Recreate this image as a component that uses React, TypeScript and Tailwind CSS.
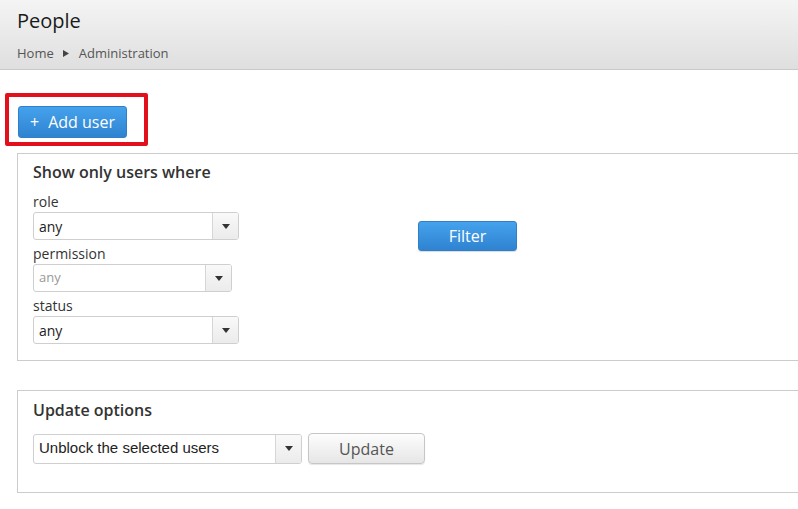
import React from 'react'

const font = { fontFamily: '"Open Sans", "Liberation Sans", sans-serif' }

function Caret() {
  return (
    <svg width="8" height="5" viewBox="0 0 8 5" className="block">
      <path d="M0 0 L8 0 L4 5 Z" fill="#333" />
    </svg>
  )
}

interface SelectProps {
  value: string
  width: string
  height: string
  muted?: boolean
  arial?: boolean
}

function FakeSelect({ value, width, height, muted, arial }: SelectProps) {
  return (
    <div
      className={`flex ${width} ${height} rounded-[3px] border border-[#cfcfcf] bg-white overflow-hidden`}
    >
      <div
        className={`flex-1 flex items-center pl-[5px] ${muted ? 'text-[13px] text-[#999]' : arial ? 'text-[15px] text-[#222]' : 'text-[14px] text-[#222]'}`}
        style={arial ? { fontFamily: '"Liberation Sans", Arial, sans-serif' } : undefined}
      >
        {value}
      </div>
      <div className="w-[26px] flex items-center justify-center border-l border-[#d6d6d6] bg-gradient-to-b from-[#f9f9f9] to-[#ebebeb]">
        <Caret />
      </div>
    </div>
  )
}

export default function App() {
  return (
    <div className="w-[798px] h-[509px] bg-white overflow-hidden text-[#333]" style={font}>
      {/* header */}
      <div className="h-[70px] bg-gradient-to-b from-[#f4f4f4] to-[#dfdfdf] border-b border-[#c9c9c9] pl-[17px] pt-[7px]">
        <h1 className="text-[20px] leading-[28px] text-[#1a1a1a]">People</h1>
        <div className="mt-[9px] flex items-center text-[13px] leading-[18px] text-[#555]">
          <span>Home</span>
          <svg width="6" height="7" viewBox="0 0 6 7" className="ml-[9px] mr-[10px]">
            <path d="M0 0 L6 3.5 L0 7 Z" fill="#444" />
          </svg>
          <span>Administration</span>
        </div>
      </div>

      {/* add user, with the red annotation box */}
      <div className="mt-[23px] ml-[5px] w-[143px] h-[53px] border-4 border-[#e20f1d] rounded-[2px] pl-[9px] pt-[9px]">
        <button className="w-[109px] h-[32px] rounded-[3px] border border-[#2f80c8] bg-gradient-to-b from-[#45a2ec] to-[#2f83d0] text-white text-[16px] flex items-center justify-center gap-[9px]">
          <span className="text-[16px] leading-none">+</span>
          <span>Add user</span>
        </button>
      </div>

      {/* filter fieldset */}
      <div className="mt-[7px] ml-[17px] mr-[-6px] h-[208px] border border-[#cccccc] pl-[15px] pt-[7px]">
        <div className="text-[16px] leading-[22px] font-semibold text-[#333]">Show only users where</div>
        <div className="flex items-start">
          <div className="w-[206px] mt-[9px]">
            <div className="text-[14px] leading-[20px] text-[#333]">role</div>
            <FakeSelect value="any" width="w-[206px]" height="h-[28px]" />
            <div className="mt-[4px] text-[14px] leading-[20px] text-[#333]">permission</div>
            <FakeSelect value="any" width="w-[199px]" height="h-[28px]" muted />
            <div className="mt-[4px] text-[14px] leading-[20px] text-[#333]">status</div>
            <FakeSelect value="any" width="w-[206px]" height="h-[28px]" />
          </div>
          <button className="ml-[179px] mt-[38px] w-[99px] h-[30px] rounded-[3px] border border-[#2f80c8] bg-gradient-to-b from-[#45a2ec] to-[#2f83d0] text-white text-[16px] shadow-[0_1px_1px_rgba(0,0,0,0.15)]">
            Filter
          </button>
        </div>
      </div>

      {/* update options fieldset */}
      <div className="mt-[29px] ml-[17px] mr-[-6px] h-[103px] border border-[#cccccc] pl-[15px] pt-[8px]">
        <div className="text-[16px] leading-[22px] font-semibold text-[#333]">Update options</div>
        <div className="mt-[12px] flex items-center gap-[6px]">
          <FakeSelect value="Unblock the selected users" width="w-[269px]" height="h-[30px]" arial />
          <button className="w-[117px] h-[31px] rounded-[4px] border border-[#c6c6c6] bg-gradient-to-b from-[#fdfdfd] to-[#e6e6e6] text-[16px] text-[#555] shadow-[0_1px_1px_rgba(0,0,0,0.1)]">
            Update
          </button>
        </div>
      </div>
    </div>
  )
}
